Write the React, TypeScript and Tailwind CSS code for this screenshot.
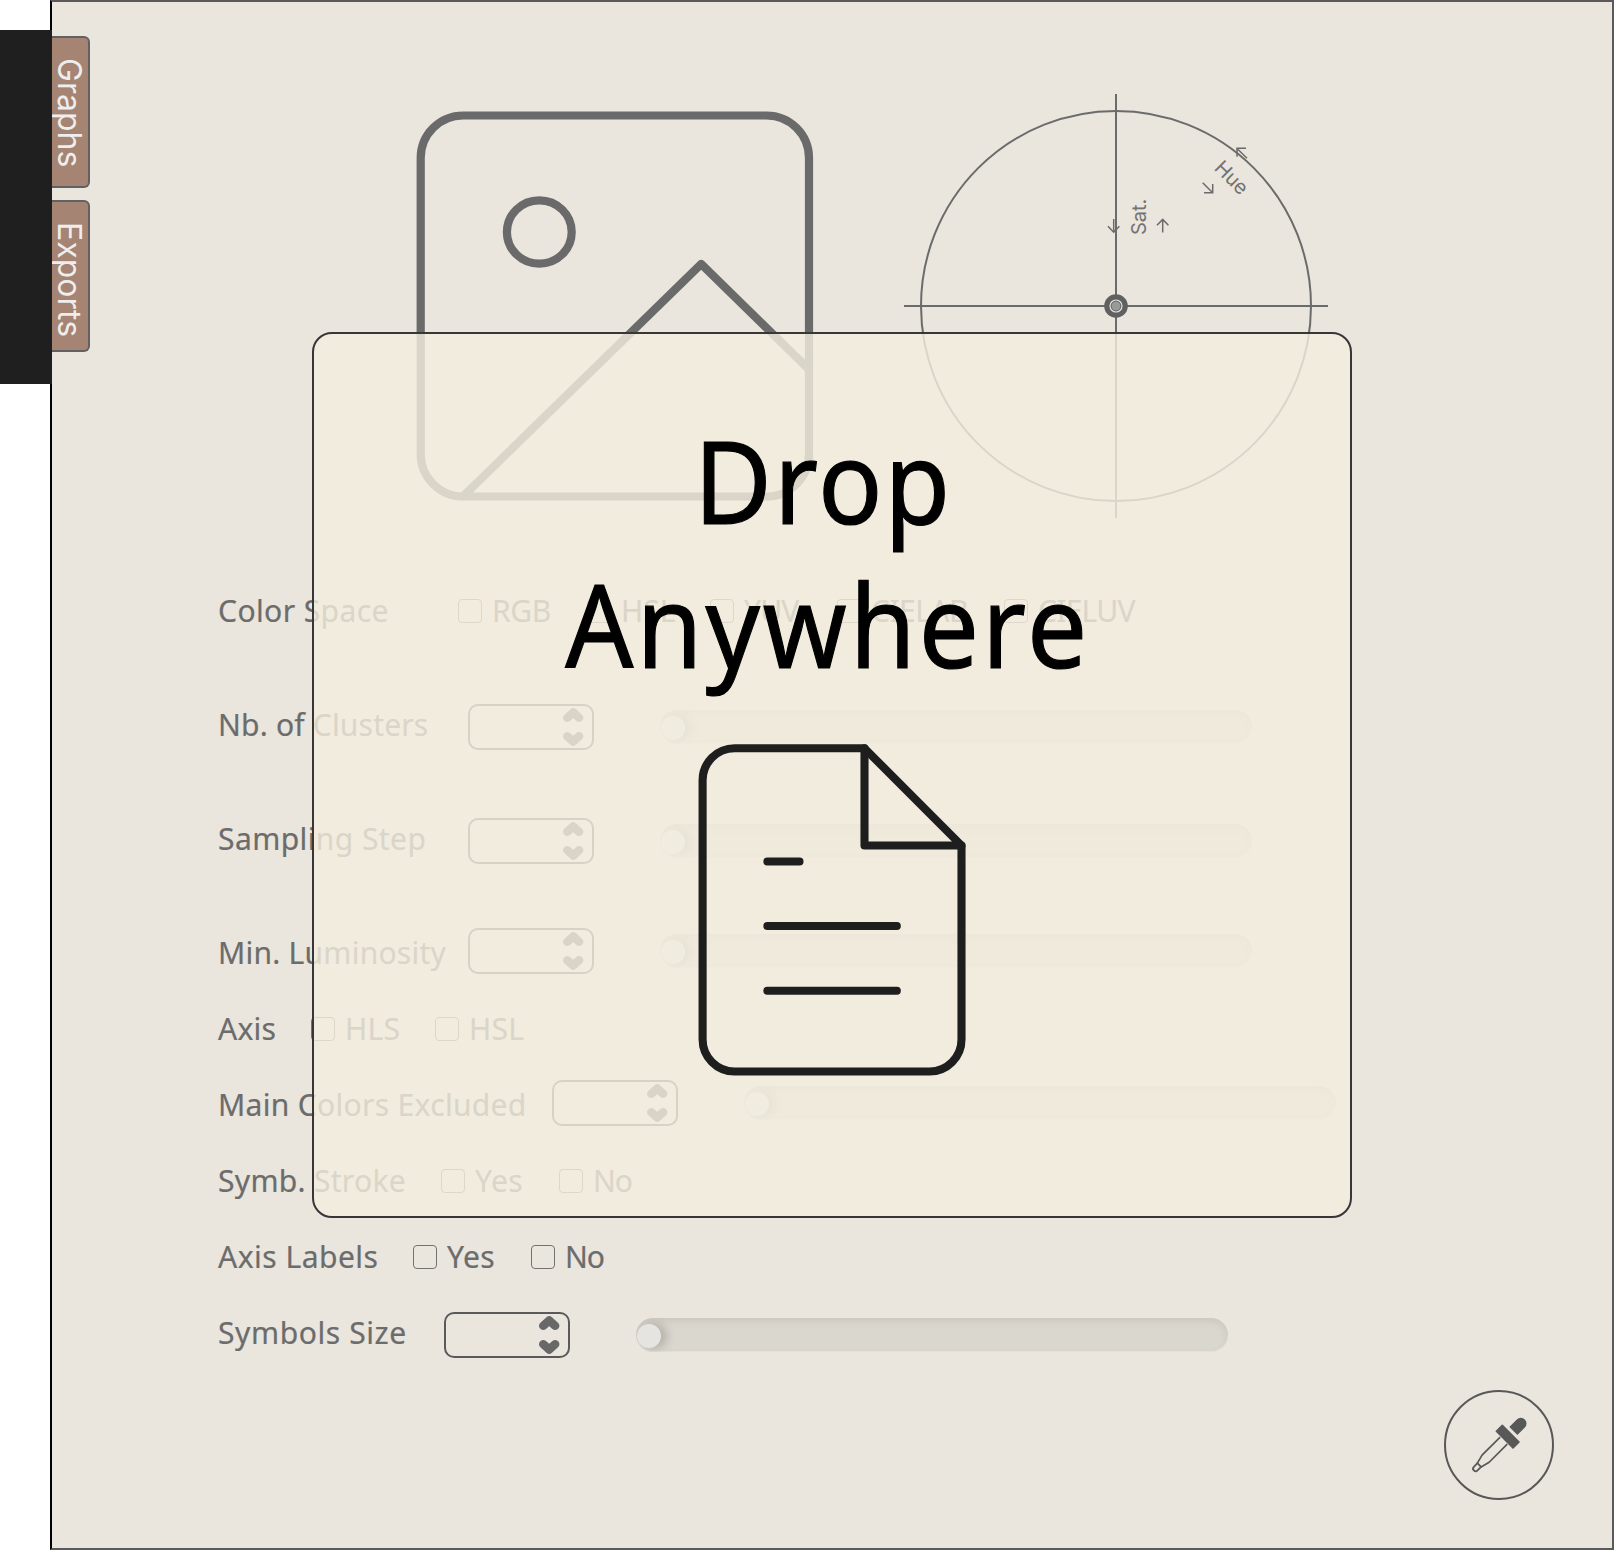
import React from 'react';

type TextItem = { text: string; track: string };
type Option = TextItem & { width: string };

function Label({ text, track }: TextItem) {
  return (
    <span className={`inline-block origin-left scale-x-[0.97] whitespace-nowrap ${track}`}>{text}</span>
  );
}

function Options({ items }: { items: Option[] }) {
  return (
    <div className="flex">
      {items.map((o) => (
        <div key={o.text} className={`flex shrink-0 gap-2.5 ${o.width}`}>
          <span className="mt-2 h-6 w-6 shrink-0 rounded-[4px] border border-[#70736f]" />
          <Label text={o.text} track={o.track} />
        </div>
      ))}
    </div>
  );
}

function NumberBox() {
  return (
    <div className="flex h-[46px] w-[126px] shrink-0 justify-end rounded-[10px] border-2 border-[#5a5a5a] pr-[7px]">
      <svg width="24" height="42" viewBox="0 0 24 42" fill="none" stroke="#686868" strokeWidth="8.4" strokeLinecap="round" strokeLinejoin="round">
        <path d="M6.2 11.8 12.2 6.5 18.2 11.8" />
        <path d="M6.2 30.2 12.2 35.5 18.2 30.2" />
      </svg>
    </div>
  );
}

function Slider() {
  return (
    <div className="mt-1.5 h-[34px] w-[592px] shrink-0 overflow-hidden rounded-full bg-[#dad7cf] pl-px pt-1.5 shadow-[inset_0_3px_7px_rgba(130,115,100,0.16),inset_0_-1px_1px_rgba(255,255,255,0.35)]">
      <div className="h-6 w-6 rounded-full bg-[#e5e4e1] shadow-[5px_0_8px_1px_rgba(100,95,85,0.3)]" />
    </div>
  );
}

function SliderRow({ label, width, offset }: { label: TextItem; width: string; offset: string }) {
  return (
    <div className="flex h-[38px]">
      <div className={`shrink-0 ${width}`}>
        <Label {...label} />
      </div>
      <div className={`flex gap-[66px] self-start ${offset}`}>
        <NumberBox />
        <Slider />
      </div>
    </div>
  );
}

function OptionRow({ label, width, items }: { label: TextItem; width: string; items: Option[] }) {
  return (
    <div className="flex h-[38px]">
      <div className={`shrink-0 ${width}`}>
        <Label {...label} />
      </div>
      <Options items={items} />
    </div>
  );
}

function Tab({ text }: { text: string }) {
  return (
    <div className="h-[152px] w-[38px] rounded-r-[6px] border-2 border-l-0 border-[#616161] bg-[#a58473] pr-[2px] pt-[20px] font-['Inter'] text-[32px] leading-[34px] text-[#efeeee] [writing-mode:vertical-rl]">
      <span className="inline-block">{text}</span>
    </div>
  );
}

function PictureIcon() {
  return (
    <svg width="398" height="390" viewBox="0 0 398 390" fill="none" stroke="#6a6a6a" strokeWidth="8.2" strokeLinecap="round" strokeLinejoin="round">
      <rect x="4.7" y="4.5" width="388.3" height="381" rx="42.5" />
      <ellipse cx="123.3" cy="121" rx="32.4" ry="31.7" />
      <path d="M47.5 385 285.2 153 393 258.5" strokeLinecap="butt" />
    </svg>
  );
}

function ColorWheel() {
  return (
    <svg width="424" height="424" viewBox="0 0 424 424" fill="none" stroke="#6a6b6a">
      <circle cx="212" cy="212" r="195" strokeWidth="2" />
      <path d="M212 0V424M0 212H424" strokeWidth="2" stroke="#696c68" />
      <circle cx="212" cy="212" r="11.8" fill="#606060" stroke="none" />
      <circle cx="212" cy="212" r="6" strokeWidth="1.2" stroke="#e4e4e4" />
      <circle cx="212" cy="212" r="4.5" fill="#999" stroke="none" />
      <path
        strokeWidth="1.5"
        d="M209.7 125v13M204 132.3l5.7 5.9 5.7-5.9M258.7 138.6v-13M253 131.3l5.7-5.9 5.7 5.9M343 64.3 333 54.5M342 54.3h-9v8.4M298.7 88.7l10 10M300 98.7h8.7V90"
      />
      <g fill="#727372" stroke="none" className="font-['Inter'] text-[20px]">
        <text transform="translate(241.6 141) rotate(-90)">Sat.</text>
        <text transform="translate(309.2 75) rotate(45)">Hue</text>
      </g>
    </svg>
  );
}

function DocumentIcon() {
  return (
    <svg width="268" height="332" viewBox="698 744 268 332" fill="none" stroke="#1e1e1e" strokeWidth="8.1" strokeLinecap="round" strokeLinejoin="round">
      <path d="M961.5 845.5V1039.5a32 32 0 0 1-32 32H734.6a32 32 0 0 1-32-32V780.3a32 32 0 0 1 32-32H864.5Z" />
      <path d="M864.5 748.3V845.5H961.5" />
      <path d="M767.3 861.5h32.3M767.3 926h129.6M767.3 990.7h129.6" strokeWidth="7.9" />
    </svg>
  );
}

function Dropper() {
  return (
    <svg width="106" height="106" viewBox="0 0 106 106" fill="none">
      <g transform="translate(29.7 76.6) rotate(-45)" stroke="#585858" strokeWidth="1.7">
        <path d="M39.6-5H14L4.5-2.6M39.6 5H14L4.5 2.6" strokeLinejoin="round" />
        <path d="M5-3.3V3.3M5-2.6H0A2.6 2.6 0 0 0 0 2.6H5" strokeWidth="1.8" />
        <rect x="40.2" y="-12.6" width="10" height="25.2" rx=".8" fill="#585858" stroke="none" />
        <path d="M53.3-5.7H63.8a5.7 5.7 0 0 1 0 11.4H53.3Z" fill="#585858" stroke="none" />
      </g>
    </svg>
  );
}

export default function App() {
  return (
    <div className="flex h-[1550px] w-[1614px] overflow-hidden bg-white">
      <aside className="relative z-10 w-[50px] shrink-0 pt-[30px]">
        <div className="h-[354px] w-[52px] bg-[#1f1f1f]" />
      </aside>
      <main className="relative flex-1 border-2 border-[#5a5a5a] border-l-black bg-[#eae5dd] text-[#6b6c6b]">
        <nav className="absolute left-0 top-[34px] flex flex-col gap-3">
          <Tab text="Graphs" />
          <Tab text="Exports" />
        </nav>

        <div className="mt-[92px] flex h-[424px] gap-[90px] pl-[364px]">
          <div className="pt-[17px]">
            <PictureIcon />
          </div>
          <ColorWheel />
        </div>

        <form className="mt-[73px] flex flex-col pl-[165.5px] font-['Noto_Sans'] text-[31px] leading-[38px] [-webkit-text-stroke:0.2px_#6b6c6b]">
          <div className="flex flex-col gap-[76px]">
            <OptionRow
              label={{ text: 'Color Space', track: 'tracking-[0.4px]' }}
              width="w-[240px]"
              items={[
                { text: 'RGB', track: 'tracking-[-0.4px]', width: 'w-[129px]' },
                { text: 'HSL', track: 'tracking-[0px]', width: 'w-[123.5px]' },
                { text: 'YUV', track: 'tracking-[-0.9px]', width: 'w-[126.5px]' },
                { text: 'CIELAB', track: 'tracking-[-0.6px]', width: 'w-[167px]' },
                { text: 'CIELUV', track: 'tracking-[-0.8px]', width: 'w-[150px]' },
              ]}
            />
            <SliderRow label={{ text: 'Nb. of Clusters', track: 'tracking-[0.17px]' }} width="w-[250.5px]" offset="-mt-px" />
            <SliderRow label={{ text: 'Sampling Step', track: 'tracking-[0.4px]' }} width="w-[250.5px]" offset="-mt-px" />
            <SliderRow label={{ text: 'Min. Luminosity', track: 'tracking-[0.22px]' }} width="w-[250.5px]" offset="-mt-[5px]" />
          </div>
          <div className="mt-[38px] flex flex-col gap-[38px]">
            <OptionRow
              label={{ text: 'Axis', track: 'tracking-[0.2px]' }}
              width="w-[93.5px]"
              items={[
                { text: 'HLS', track: 'tracking-[0.2px]', width: 'w-[124px]' },
                { text: 'HSL', track: 'tracking-[0.2px]', width: 'w-[124px]' },
              ]}
            />
            <SliderRow label={{ text: 'Main Colors Excluded', track: 'tracking-[0.3px]' }} width="w-[334.5px]" offset="-mt-[5px]" />
            <OptionRow
              label={{ text: 'Symb. Stroke', track: 'tracking-[0.28px]' }}
              width="w-[223.5px]"
              items={[
                { text: 'Yes', track: 'tracking-[0.4px]', width: 'w-[117.5px]' },
                { text: 'No', track: 'tracking-[-1.1px]', width: 'w-[100px]' },
              ]}
            />
            <OptionRow
              label={{ text: 'Axis Labels', track: 'tracking-[0.48px]' }}
              width="w-[195.5px]"
              items={[
                { text: 'Yes', track: 'tracking-[0.4px]', width: 'w-[117.5px]' },
                { text: 'No', track: 'tracking-[-1.1px]', width: 'w-[100px]' },
              ]}
            />
            <SliderRow label={{ text: 'Symbols Size', track: 'tracking-[0.58px]' }} width="w-[226.5px]" offset="-mt-px" />
          </div>
        </form>

        <button className="absolute bottom-[48px] right-[58px] h-[110px] w-[110px] rounded-full border-2 border-[#585858]">
          <Dropper />
        </button>

        <div className="absolute left-[260px] top-[330px] flex h-[886px] w-[1040px] flex-col items-center rounded-[20px] border-2 border-[#383636] bg-[rgba(244,238,223,0.81)] bg-clip-padding pt-[73px]">
          <h1 className="flex flex-col items-center font-['Noto_Sans'] text-[116px] leading-[144px] text-black [-webkit-text-stroke:1.2px_black]">
            <span className="scale-x-[0.92] pr-[20px] tracking-[2.2px]">Drop</span>
            <span className="scale-x-[0.92] pr-[9px] tracking-[3.3px]">Anywhere</span>
          </h1>
          <div className="mt-[49px]">
            <DocumentIcon />
          </div>
        </div>
      </main>
    </div>
  );
}
